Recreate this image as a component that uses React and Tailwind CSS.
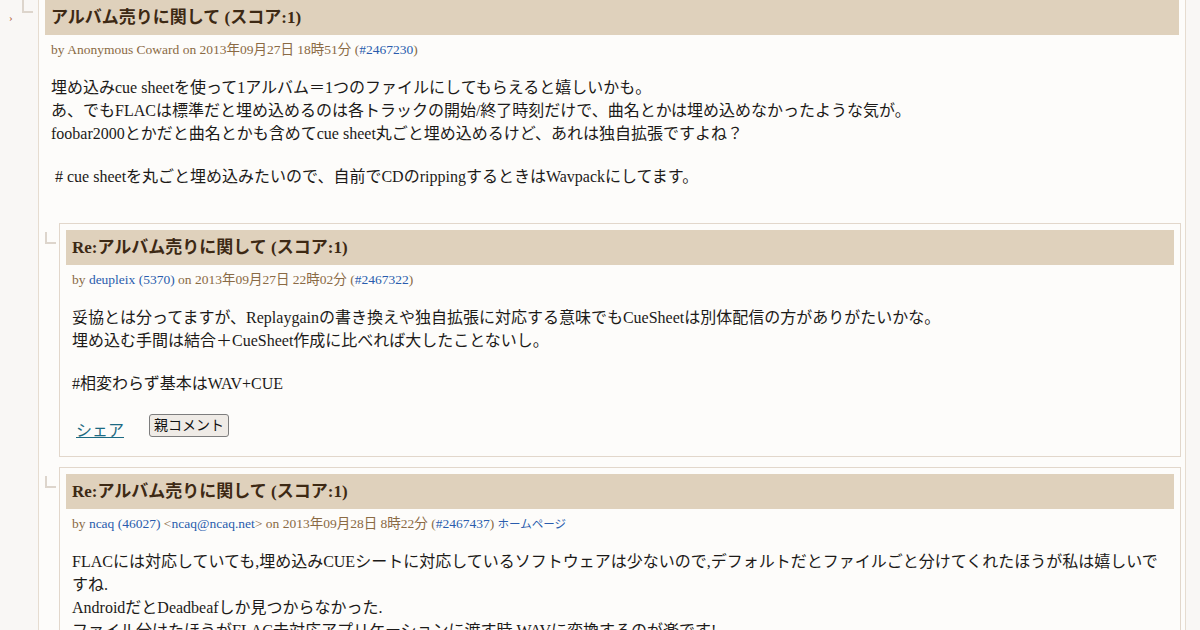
import React from "react";

const link = "text-[#2a5cad]";

const comments = {
  top: {
    title: "アルバム売りに関して (スコア:1)",
    meta: (
      <>
        by Anonymous Coward on 2013年09月27日 18時51分 (<span className={link}>#2467230</span>)
      </>
    ),
    body: [
      [
        "埋め込みcue sheetを使って1アルバム＝1つのファイルにしてもらえると嬉しいかも。",
        "あ、でもFLACは標準だと埋め込めるのは各トラックの開始/終了時刻だけで、曲名とかは埋め込めなかったような気が。",
        "foobar2000とかだと曲名とかも含めてcue sheet丸ごと埋め込めるけど、あれは独自拡張ですよね？",
      ],
      [" # cue sheetを丸ごと埋め込みたいので、自前でCDのrippingするときはWavpackにしてます。"],
    ],
  },
  reply1: {
    title: "Re:アルバム売りに関して (スコア:1)",
    meta: (
      <>
        by <span className={link}>deupleix (5370)</span> on 2013年09月27日 22時02分 (
        <span className={link}>#2467322</span>)
      </>
    ),
    body: [
      [
        "妥協とは分ってますが、Replaygainの書き換えや独自拡張に対応する意味でもCueSheetは別体配信の方がありがたいかな。",
        "埋め込む手間は結合＋CueSheet作成に比べれば大したことないし。",
      ],
      ["#相変わらず基本はWAV+CUE"],
    ],
    actions: true,
  },
  reply2: {
    title: "Re:アルバム売りに関して (スコア:1)",
    meta: (
      <>
        by <span className={link}>ncaq (46027)</span> &lt;<span className={link}>ncaq@ncaq.net</span>&gt; on
        2013年09月28日 8時22分 (<span className={link}>#2467437</span>){" "}
        <span className={`${link} text-[11.5px]`}>ホームページ</span>
      </>
    ),
    body: [
      [
        "FLACには対応していても,埋め込みCUEシートに対応しているソフトウェアは少ないので,デフォルトだとファイルごと分けてくれたほうが私は嬉しいですね.",
        "AndroidだとDeadbeafしか見つからなかった.",
        "ファイル分けたほうがFLAC未対応アプリケーションに渡す時,WAVに変換するのが楽です!",
      ],
    ],
  },
};

const Connector = ({ className }) => (
  <div
    className={`absolute w-[11px] border-l-2 border-b-2 border-[#ddd5cc] ${className}`}
  />
);

const CommentBody = ({ c }) => (
  <>
    <div className="h-[35px] bg-[#dfd1bc] px-[6px] text-[17px] font-bold leading-[35px] text-[#3d2914]">
      {c.title}
    </div>
    <div className="mt-[6px] px-[6px] text-[13.5px] leading-[18px] text-[#8a6a44] whitespace-nowrap">
      {c.meta}
    </div>
    <div className="mt-[17px] px-[6px] text-[16px] leading-[23px] text-[#1c1a18]">
      {c.body.map((para, i) => (
        <p key={i} className={i > 0 ? "mt-[20px] whitespace-pre" : ""}>
          {para.map((line, j) => (
            <span key={j} className="block">
              {line}
            </span>
          ))}
        </p>
      ))}
    </div>
    {c.actions && (
      <div className="mt-[19px] mb-[8px] flex items-start pl-[10px]">
        <span className="mt-[5px] text-[16px] leading-[23px] text-[#1c6a82] underline">シェア</span>
        <button className="ml-[25px] h-[23px] rounded-[3px] border border-[#7d7d7d] bg-[#efebe6] px-[4px] text-[14px] leading-[20px] text-[#111]">
          親コメント
        </button>
      </div>
    )}
  </>
);

const Reply = ({ c, className = "" }) => (
  <div className={`relative ml-[14px] mr-[-2px] border border-[#e2d7cb] p-[6px] ${className}`}>
    <Connector className="left-[-15px] top-[8px] h-[12px]" />
    <CommentBody c={c} />
  </div>
);

export default function App() {
  return (
    <div className="flex h-[630px] overflow-hidden bg-[#f9f7f5] font-['Liberation_Serif','Noto_Sans_CJK_JP',serif]">
      <div className="relative w-[38px] shrink-0">
        <span className="absolute left-[9px] top-[9px] text-[11px] text-[#b3643c]">›</span>
        <Connector className="left-[22px] top-0 h-[13px]" />
      </div>
      <div className="w-[1148px] shrink-0 border-x border-[#e6dcd0] bg-[#fdfcfa] px-[6px]">
        <CommentBody c={comments.top} />
        <Reply c={comments.reply1} className="mt-[35px]" />
        <Reply c={comments.reply2} className="mt-[10px]" />
      </div>
    </div>
  );
}
